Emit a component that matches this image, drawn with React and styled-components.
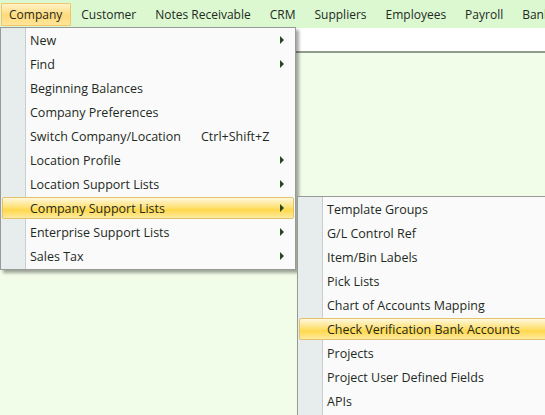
import React from 'react';
import styled, {createGlobalStyle, css} from 'styled-components';

const Global = createGlobalStyle`
  html, body {
    margin: 0;
    padding: 0;
    background: #f1fde8;
    overflow: hidden;
  }
  body {
    font-family: "Open Sans", "Noto Sans", sans-serif;
    font-size: 12px;
    color: #1e2a1e;
  }
  * { box-sizing: border-box; }
`;

const Page = styled.div`
  width: 545px;
  height: 415px;
  position: relative;
  overflow: hidden;
  background: #f1fde8;
`;

const MenuBar = styled.div`
  display: flex;
  align-items: center;
  height: 28px;
  padding-left: 1px;
  background: #dbf8d1;
  gap: 2px;
`;

const BarItem = styled.div`
  height: 23px;
  line-height: 21px;
  padding: 0 8px 0 7px;
  white-space: nowrap;
  border: 1px solid transparent;
  border-radius: 1px;
  ${p => p.$open && css`
    background: linear-gradient(#fff3c8, #ffd97a 55%, #ffe69a);
    border-color: #f2c56b;
  `}
`;

const Strip = styled.div`
  height: 25px;
  background: #ffffff;
  border-bottom: 2px solid #909c8c;
`;

const Menu = styled.div`
  position: absolute;
  left: ${p => p.$x}px;
  top: ${p => p.$y}px;
  width: ${p => p.$w}px;
  background: #fafafa;
  border: 1px solid #979a97;
  box-shadow: 3px 3px 3px rgba(0, 0, 0, 0.35);
  padding: 1px 1px ${p => p.$pb || 0}px 1px;
  display: flex;
  flex-direction: column;
  font-size: 12.5px;
  &::before {
    content: '';
    position: absolute;
    left: 0;
    top: 0;
    bottom: 0;
    width: 24px;
    background: #e7ecec;
    border-right: 1px solid #c8cdcd;
  }
`;

const Item = styled.div`
  position: relative;
  height: 22px;
  display: flex;
  align-items: center;
  padding-left: 27px;
  padding-right: 8px;
  margin-bottom: 2px;
  border: 1px solid transparent;
  border-radius: 2px;
  white-space: nowrap;
  ${p => p.$hot && css`
    background: linear-gradient(#fff8dc, #ffe27a 45%, #ffd84c 60%, #ffeaa0);
    border-color: #e2c36c;
  `}
`;

const Label = styled.span`
  flex: 1;
`;

const Shortcut = styled.span`
  position: absolute;
  left: 198px;
`;

const Arrow = styled.span`
  width: 0;
  height: 0;
  border-top: 4px solid transparent;
  border-bottom: 4px solid transparent;
  border-left: 4px solid #29481c;
  margin-right: 1px;
`;

const topItems = [
  {label: 'New', sub: true},
  {label: 'Find', sub: true},
  {label: 'Beginning Balances'},
  {label: 'Company Preferences'},
  {label: 'Switch Company/Location', key: 'Ctrl+Shift+Z'},
  {label: 'Location Profile', sub: true},
  {label: 'Location Support Lists', sub: true},
  {label: 'Company Support Lists', sub: true, hot: true},
  {label: 'Enterprise Support Lists', sub: true},
  {label: 'Sales Tax', sub: true},
];

const subItems = [
  'Template Groups',
  'G/L Control Ref',
  'Item/Bin Labels',
  'Pick Lists',
  'Chart of Accounts Mapping',
  'Check Verification Bank Accounts',
  'Projects',
  'Project User Defined Fields',
  'APIs',
];

const bar = ['Company', 'Customer', 'Notes Receivable', 'CRM', 'Suppliers', 'Employees', 'Payroll', 'Bank'];

export default function App () {
  return (
    <Page>
      <Global />
      <MenuBar>
        {bar.map((b, i) => <BarItem key={b} $open={i === 0}>{b}</BarItem>)}
      </MenuBar>
      <Strip />
      <Menu $x={0} $y={27} $w={296}>
        {topItems.map(it => (
          <Item key={it.label} $hot={it.hot}>
            <Label>{it.label}</Label>
            {it.key && <Shortcut>{it.key}</Shortcut>}
            {it.sub && <Arrow />}
          </Item>
        ))}
      </Menu>
      <Menu $x={297} $y={196} $w={260} $pb={20}>
        {subItems.map((s, i) => (
          <Item key={s} $hot={i === 5}>
            <Label>{s}</Label>
          </Item>
        ))}
      </Menu>
    </Page>
  );
}
